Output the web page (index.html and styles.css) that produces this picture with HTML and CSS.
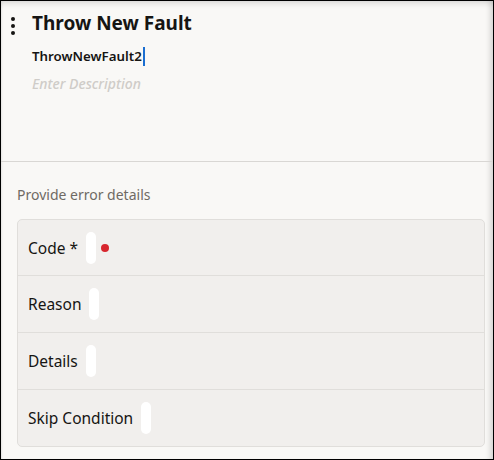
FILE: index.html
```html
<!DOCTYPE html>
<html>
<head>
<meta charset="utf-8">
<link rel="stylesheet" href="styles.css">
</head>
<body>
<div class="panel">
  <div class="header">
    <div class="kebab"><span></span><span></span><span></span></div>
    <div class="head-text">
      <div class="title">Throw New Fault</div>
      <div class="name">ThrowNewFault2<span class="caret"></span></div>
      <div class="desc">Enter Description</div>
    </div>
  </div>
  <div class="body">
    <div class="section-label">Provide error details</div>
    <div class="card">
      <div class="row"><span class="label">Code *</span><span class="pill"></span><span class="dot"></span></div>
      <div class="row"><span class="label">Reason</span><span class="pill"></span></div>
      <div class="row"><span class="label">Details</span><span class="pill"></span></div>
      <div class="row"><span class="label">Skip Condition</span><span class="pill"></span></div>
    </div>
  </div>
</div>
</body>
</html>
```

FILE: styles.css
```css
html, body {
  margin: 0;
  padding: 0;
}
body {
  width: 494px;
  height: 460px;
  font-family: "Noto Sans", "Open Sans", sans-serif;
  color: #161513;
}
.panel {
  box-sizing: border-box;
  width: 494px;
  height: 460px;
  border: 1px solid #000;
  background: #f9f8f6;
  box-shadow: inset -7px 0 6px -5px rgba(0,0,0,0.18), inset 0 7px 6px -5px rgba(0,0,0,0.14), inset 2px 0 2px -1px rgba(0,0,0,0.08);
  display: flex;
  flex-direction: column;
}
.header {
  height: 161px;
  box-sizing: border-box;
  border-bottom: 1px solid #d9d7d4;
  display: flex;
  padding: 9px 0 0 9px;
}
.kebab {
  width: 6px;
  display: flex;
  flex-direction: column;
  gap: 3px;
  padding-top: 7px;
  align-items: center;
}
.kebab span {
  width: 4px;
  height: 4px;
  border-radius: 50%;
  background: #161513;
}
.head-text {
  margin-left: 16px;
}
.title {
  font-size: 19px;
  font-weight: 700;
  line-height: 26px;
}
.name {
  margin-top: 10px;
  font-size: 13.3px;
  font-weight: 600;
  line-height: 20px;
  display: flex;
  align-items: center;
}
.caret {
  display: inline-block;
  width: 2px;
  height: 19px;
  background: #1b6ed1;
  margin-left: 1px;
}
.desc {
  margin-top: 8px;
  font-size: 14px;
  font-style: italic;
  font-weight: 500;
  color: #cfccc8;
  line-height: 20px;
}
.body {
  padding: 23px 8px 0 16px;
}
.section-label {
  font-size: 14px;
  color: #6f6a64;
  line-height: 20px;
}
.card {
  margin-top: 14px;
  background: #f1efed;
  border: 1px solid #e0dedb;
  border-radius: 5px;
}
.row {
  height: 55px;
  display: flex;
  align-items: center;
  padding-left: 10px;
  box-sizing: border-box;
}
.row + .row {
  border-top: 1px solid #e0dedb;
  height: 57px;
}
.label {
  font-size: 15.5px;
  line-height: 22px;
}
.pill {
  width: 10px;
  height: 32px;
  border-radius: 5px;
  background: #fff;
  margin-left: 8px;
}
.dot {
  width: 8px;
  height: 8px;
  border-radius: 50%;
  background: #d7262e;
  margin-left: 5px;
}
```
